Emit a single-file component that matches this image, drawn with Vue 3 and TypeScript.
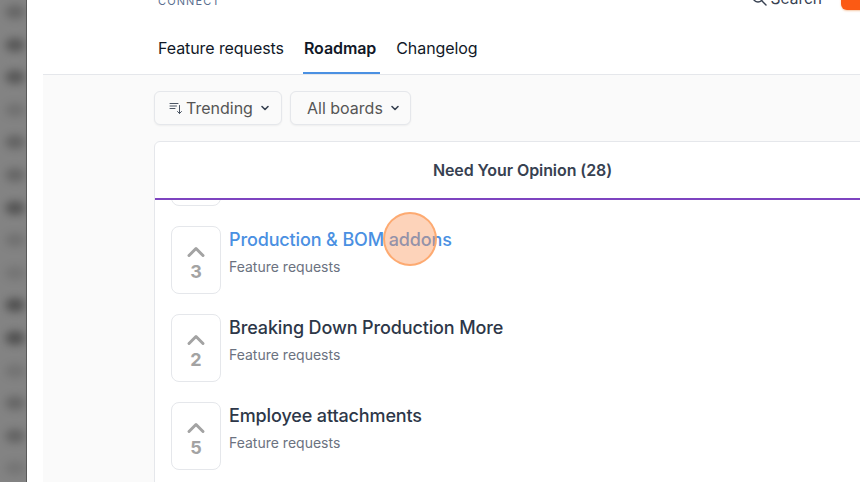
<template>
  <div class="page">
    <div class="rail">
      <span v-for="(o, i) in railSpots" :key="i" class="spot" :style="{ opacity: o }"></span>
    </div>

    <div class="panel">
      <header class="top">
        <div class="top-row">
          <span class="logo">CONNECT</span>
          <div class="top-right">
            <span class="search">
              <svg width="16" height="16" viewBox="0 0 16 16" fill="none" stroke="#374151" stroke-width="1.4" stroke-linecap="round">
                <circle cx="7" cy="7" r="5" />
                <path d="M11 11 15 15" />
              </svg>
              Search
            </span>
            <span class="cta"></span>
          </div>
        </div>
        <nav class="tabs">
          <a class="tab">Feature requests</a>
          <a class="tab active">Roadmap</a>
          <a class="tab">Changelog</a>
        </nav>
      </header>

      <main class="body">
        <div class="filters">
          <button class="filter trending">
            <svg width="14" height="14" viewBox="0 0 14 14" fill="none" stroke="#4b5563" stroke-width="1" stroke-linecap="round" stroke-linejoin="round">
              <path d="M1 2.500h8M1 5h6.500M1 7.500h5M10.500 4.500v8M8.500 10.500l2 2 2-2" />
            </svg>
            <span>Trending</span>
            <svg class="caret" width="10" height="10" viewBox="0 0 10 10" fill="none" stroke="#374151" stroke-width="1.6" stroke-linecap="round" stroke-linejoin="round">
              <path d="M2 3.500 5 6.500 8 3.500" />
            </svg>
          </button>
          <button class="filter boards">
            <span>All boards</span>
            <svg class="caret" width="10" height="10" viewBox="0 0 10 10" fill="none" stroke="#374151" stroke-width="1.6" stroke-linecap="round" stroke-linejoin="round">
              <path d="M2 3.500 5 6.500 8 3.500" />
            </svg>
          </button>
        </div>

        <section class="board">
          <h2 class="board-title">Need Your Opinion (28)</h2>
          <div class="list">
            <div class="rows">
              <article v-for="post in posts" :key="post.votes" class="post">
                <div class="vote">
                  <svg width="20" height="13" viewBox="0 0 20 13" fill="none" stroke="#a3a3a3" stroke-width="3" stroke-linecap="round" stroke-linejoin="round">
                    <path d="M3 10.500 10 3.500 17 10.500" />
                  </svg>
                  <span class="count">{{ post.votes }}</span>
                </div>
                <div class="info">
                  <h3 class="title" :class="{ hover: post.hover }">{{ post.title }}</h3>
                  <p class="sub">Feature requests</p>
                </div>
              </article>
            </div>
          </div>
        </section>
      </main>
    </div>

    <span class="click-dot"></span>
  </div>
</template>

<script setup lang="ts">
interface Post {
  title: string;
  votes: number;
  hover?: boolean;
}

const railSpots: number[] = [0.4, 0.6, 0.6, 0.25, 0.45, 0.4, 0.65, 0.25, 0.2, 0.7, 0.7, 0.22, 0.4, 0.45, 0.2];

const posts: Post[] = [
  { title: "Production & BOM addons", votes: 3, hover: true },
  { title: "Breaking Down Production More", votes: 2 },
  { title: "Employee attachments", votes: 5 },
];
</script>

<style>
html,
body {
  margin: 0;
  overflow: hidden;
}
</style>

<style scoped>
.page {
  position: relative;
  display: flex;
  width: 860px;
  height: 482px;
  overflow: hidden;
  font-family: Inter, "Liberation Sans", sans-serif;
  background: #fff;
}

.rail {
  flex: none;
  display: flex;
  flex-direction: column;
  gap: 18.600px;
  box-sizing: border-box;
  width: 27px;
  padding: 5px 0 0 5px;
  overflow: hidden;
  background: #838383;
  box-shadow: inset -1px 0 0 #5a5a5a;
}

.spot {
  flex: none;
  width: 20px;
  height: 14px;
  border-radius: 50%;
  background: #3c3c3c;
  filter: blur(4px);
}

.panel {
  flex: 1;
  display: flex;
  flex-direction: column;
  min-width: 0;
  padding-left: 16px;
}

.top {
  flex: none;
  box-sizing: border-box;
  height: 75px;
  padding-left: 115px;
  border-bottom: 1px solid #e5e7eb;
  background: #fff;
}

.top-row {
  display: flex;
  justify-content: space-between;
  height: 36px;
  margin-top: -5px;
}

.logo {
  font-size: 11px;
  line-height: 12px;
  letter-spacing: 1.100px;
  color: #5b6f8f;
}

.top-right {
  display: flex;
  align-items: flex-start;
  gap: 19px;
  margin-right: -21px;
}

.search {
  display: flex;
  align-items: center;
  gap: 4px;
  height: 16px;
  margin-top: -5px;
  font-size: 15.500px;
  color: #374151;
}

.cta {
  width: 40px;
  height: 15px;
  border-radius: 0 0 0 6px;
  background: #fb5a14;
  box-shadow: 0 1px 2px #f5c9a8;
}

.tabs {
  display: flex;
  gap: 20px;
}

.tab {
  height: 43px;
  box-sizing: border-box;
  padding-top: 6px;
  font-size: 16px;
  line-height: 22px;
  letter-spacing: -0.080px;
  color: #111827;
  white-space: nowrap;
}

.tab.active {
  font-weight: 600;
  border-bottom: 2px solid #4a90e2;
  margin: 0 -4px 0 -1px;
  padding: 6px 4px 0 1px;
}

.body {
  flex: 1;
  min-height: 0;
  padding: 16px 0 0 111px;
  background: #fafafa;
}

.filters {
  display: flex;
  gap: 8px;
}

.filter {
  display: flex;
  align-items: center;
  box-sizing: border-box;
  height: 34px;
  padding: 0;
  border: 1px solid #e5e7eb;
  border-radius: 6px;
  background: #fafafa;
  box-shadow: 0 1px 2px rgba(0, 0, 0, 0.05);
  font: 400 16px Inter, "Liberation Sans", sans-serif;
  color: #555;
}

.trending {
  width: 128px;
  padding-left: 14px;
  gap: 3px;
}

.boards {
  width: 121px;
  padding-left: 16px;
  gap: 7px;
}

.trending .caret {
  margin-left: 4px;
}

.board {
  display: flex;
  flex-direction: column;
  width: 735px;
  height: 400px;
  margin-top: 16px;
  border: 1px solid #e5e7eb;
  border-radius: 6px 6px 0 0;
  background: #fff;
}

.board-title {
  flex: none;
  box-sizing: border-box;
  height: 58px;
  margin: 0;
  border-bottom: 2px solid #7e44c0;
  font-size: 16px;
  font-weight: 600;
  line-height: 57px;
  letter-spacing: -0.080px;
  text-align: center;
  color: #374151;
}

.list {
  flex: 1;
  overflow: hidden;
}

.rows {
  margin-top: -62px;
  padding-left: 16px;
}

.rows::before {
  content: "";
  display: block;
  box-sizing: border-box;
  width: 50px;
  height: 68px;
  margin-bottom: 20px;
  border: 1px solid #e5e7eb;
  border-radius: 8px;
}

.post {
  display: flex;
  gap: 8px;
  height: 88px;
}

.vote {
  flex: none;
  display: flex;
  flex-direction: column;
  align-items: center;
  box-sizing: border-box;
  width: 50px;
  height: 68px;
  padding-top: 18px;
  border: 1px solid #e5e7eb;
  border-radius: 8px;
}

.count {
  margin-top: 3px;
  font-size: 18px;
  font-weight: 700;
  line-height: 22px;
  color: #a3a3a3;
}

.info {
  min-width: 0;
}

.title {
  margin: 2px 0 0;
  font-size: 18px;
  font-weight: 500;
  line-height: 24px;
  letter-spacing: -0.130px;
  color: #2d3748;
  white-space: nowrap;
}

.title.hover {
  color: #4a90e2;
}

.sub {
  margin: 5px 0 0;
  font-size: 14px;
  line-height: 20px;
  color: #6b7280;
}

.click-dot {
  position: absolute;
  left: 383px;
  top: 212px;
  box-sizing: border-box;
  width: 54px;
  height: 54px;
  border: 2px solid rgba(253, 165, 105, 0.9);
  border-radius: 50%;
  background: rgba(250, 150, 90, 0.42);
}
</style>
